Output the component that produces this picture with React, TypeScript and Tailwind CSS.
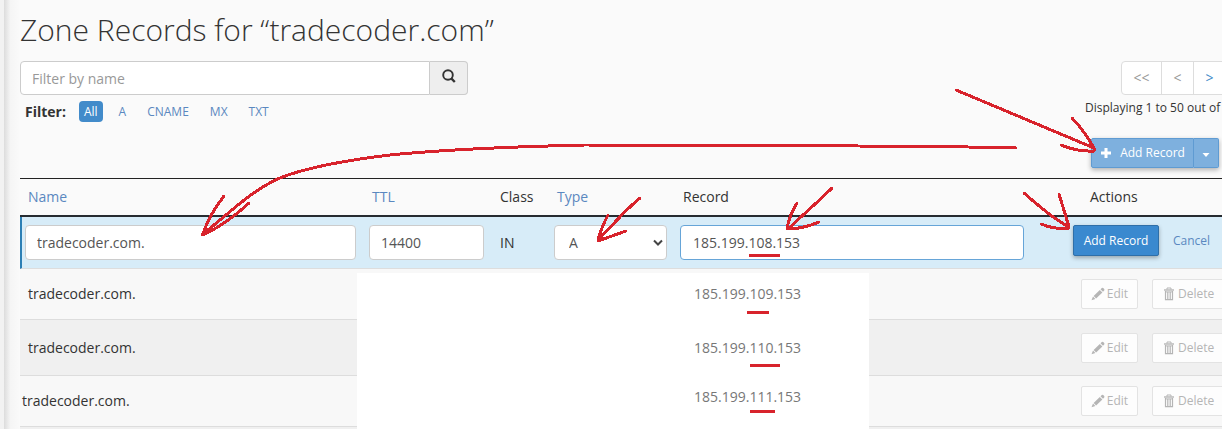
import React from 'react';

const types = ['A', 'CNAME', 'MX', 'TXT'];

const rows = [
  { record: '185.199.109.153', row: 'h-[51px] bg-[#f8f8f8]', name: 'pl-2', value: 'pb-0' },
  { record: '185.199.110.153', row: 'h-[56px] bg-[#f0f0f0]', name: 'pl-2', value: 'pb-0' },
  { record: '185.199.111.153', row: 'h-[51px] bg-[#f8f8f8]', name: 'pl-0.5', value: 'pb-2' },
];

const arrows = [
  'M956 90 L1094 148',
  'M1072 118 Q1084 130 1095 150',
  'M1061 145 Q1078 152 1094 151',
  'M1016 148 L968 147 L858 146 L585 145 C500 147 440 150 390 155 C340 161 305 168 280 178 C252 190 228 214 202 235',
  'M224 196 Q209 215 203 234',
  'M249 203 Q228 223 203 235',
  'M640 198 C625 210 612 226 598 240',
  'M608 215 Q602 226 598 240',
  'M626 231 L598 241',
  'M832 188 C820 200 806 212 788 229',
  'M797 203 Q789 216 787 229',
  'M819 222 Q802 229 788 229',
  'M1024 193 C1038 205 1050 217 1069 227',
  'M1059 194 Q1064 210 1069 227',
  'M1041 224 Q1056 230 1069 228',
];

const underlines = [
  'M749 255.5 H780',
  'M747 312.5 H769',
  'M750 365.5 H780',
  'M750 411.5 H775',
];

const field = 'h-[35px] w-full rounded border bg-white text-sm text-[#555] outline-none';

function SearchIcon() {
  return (
    <svg width="14" height="14" viewBox="0 0 14 14" fill="none" stroke="#333" aria-hidden="true">
      <circle cx="6" cy="6" r="4.8" strokeWidth="1.9" />
      <path d="M9 9.2 L12.8 13" strokeWidth="2.4" />
    </svg>
  );
}

function PencilIcon() {
  return (
    <svg width="14" height="14" viewBox="0 0 14 14" fill="currentColor" aria-hidden="true">
      <path d="M0.5 13.2 L2 9.6 L4.4 11.9 Z" />
      <path d="M2.6 8.9 L8.8 3 L11.4 5.4 L5.1 11.5 Z" />
      <path d="M9.5 2.3 L10.9 1 Q11.6 0.5 12.2 1.1 L13.2 2.1 Q13.7 2.7 13.2 3.4 L12 4.7 Z" />
    </svg>
  );
}

function TrashIcon() {
  return (
    <svg width="10" height="14" viewBox="0 0 10 14" fill="none" stroke="currentColor" aria-hidden="true">
      <path d="M3 2.5 V1 H7 V2.5" />
      <path d="M0 3 H10" strokeWidth="1.4" />
      <path d="M1.5 4 V12.7 H8.5 V4 M3.8 5 V12.5 M6.2 5 V12.5" strokeWidth="1.2" />
      <path d="M1 4.9 H9" strokeWidth="1" />
    </svg>
  );
}

function PlusIcon() {
  return (
    <svg width="12" height="12" viewBox="0 0 12 12" fill="none" stroke="white" aria-hidden="true">
      <path d="M6 1 V11 M1 6 H11" strokeWidth="3" />
    </svg>
  );
}

function Toolbar() {
  return (
    <div className="flex items-start justify-between">
      <div>
        <form className="flex">
          <input
            aria-label="Filter by name"
            placeholder="Filter by name"
            className="h-[34px] w-[410px] rounded-l border border-[#ccc] bg-white px-[11px] text-sm outline-none placeholder:text-[#999]"
          />
          <button
            type="button"
            aria-label="Search"
            className="flex h-[34px] w-[38px] items-center justify-center rounded-r border border-l-0 border-[#ccc] bg-[#eee] pb-1"
          >
            <SearchIcon />
          </button>
        </form>
        <div className="mt-1.5 flex items-center pl-[5px]">
          <span className="text-sm font-bold">Filter:</span>
          <div className="ml-[13px] flex gap-[11px] text-xs">
            <button type="button" className="h-[21px] rounded bg-[#428bca] px-[5px] text-white">
              All
            </button>
            {types.map((t) => (
              <button type="button" key={t} className="h-[21px] px-[5px] text-[#5a88c0]">
                {t}
              </button>
            ))}
          </div>
        </div>
      </div>
      <div className="w-[157px] shrink-0">
        <nav className="ml-9 flex text-sm text-[#999]">
          <button type="button" className="h-[34px] w-[41px] shrink-0 rounded-l border border-[#ddd] bg-white">
            &lt;&lt;
          </button>
          <button type="button" className="-ml-px h-[34px] w-[33px] shrink-0 border border-[#ddd] bg-white">
            &lt;
          </button>
          <button type="button" className="-ml-px h-[34px] w-[33px] shrink-0 border border-[#ddd] bg-white text-[#428bca]">
            &gt;
          </button>
        </nav>
        <p className="mt-[3px] text-xs leading-5 whitespace-nowrap">Displaying 1 to 50 out of 6</p>
        <div className="mt-5 ml-1.5 flex w-[128px] rounded-xs text-white shadow-[0_2px_5px_rgba(0,0,0,0.3)]">
          <button
            type="button"
            className="flex h-[30px] w-[103px] items-center justify-center gap-2 rounded-l-xs border border-[#5f9bd2] bg-[#7eb0de] text-xs whitespace-nowrap"
          >
            <PlusIcon />
            Add Record
          </button>
          <button
            type="button"
            aria-label="More add options"
            className="flex h-[30px] w-[25px] items-center justify-center rounded-r-xs border border-l-0 border-[#5f9bd2] bg-[#7eb0de] pt-1"
          >
            <svg width="8" height="4" viewBox="0 0 8 4" fill="white" aria-hidden="true">
              <path d="M0.5 0 H7.5 L4 4 Z" />
            </svg>
          </button>
        </div>
      </div>
    </div>
  );
}

function RecordsTable() {
  return (
    <div className="relative mt-2.5">
      <div className="absolute top-[95px] left-[337px] h-[170px] w-[512px] bg-white" />
      <table className="w-full table-fixed border-separate border-spacing-0 text-left text-sm">
        <colgroup>
          <col className="w-[344px]" />
          <col className="w-[128px]" />
          <col className="w-[57px]" />
          <col className="w-[126px]" />
          <col />
          <col className="w-[210px]" />
        </colgroup>
        <thead>
          <tr className="h-[39px] *:border-t *:border-b-2 *:border-t-[#222] *:border-b-[#262b30]">
            <th className="px-2 font-normal text-[#5a88c0]">Name</th>
            <th className="px-2 font-normal text-[#5a88c0]">TTL</th>
            <th className="px-2 font-normal">Class</th>
            <th className="px-2 font-normal text-[#5a88c0]">Type</th>
            <th className="px-2 font-normal">Record</th>
            <th className="pl-[58px] font-normal">Actions</th>
          </tr>
        </thead>
        <tbody>
          <tr className="h-[52px] bg-[#d7ecf8] *:border-b *:border-b-[#ddd]">
            <td className="border-l-2 border-l-[#2c7fb5] pr-2 pl-[3px]">
              <input aria-label="Name" defaultValue="tradecoder.com." className={`${field} border-[#ccc] px-[11px]`} />
            </td>
            <td className="pr-2 pl-[5px]">
              <input aria-label="TTL" defaultValue="14400" className={`${field} border-[#ccc] px-[11px]`} />
            </td>
            <td className="px-2 text-[#333]">IN</td>
            <td className="pr-2 pl-[5px]">
              <div className="relative">
                <select aria-label="Type" className={`${field} appearance-none border-[#ccc] px-3.5`}>
                  {types.map((t) => (
                    <option key={t}>{t}</option>
                  ))}
                </select>
                <svg
                  className="pointer-events-none absolute top-3.5 right-1"
                  width="10"
                  height="8"
                  viewBox="0 0 10 8"
                  fill="none"
                  stroke="#444"
                  strokeWidth="2"
                  aria-hidden="true"
                >
                  <path d="M1 1.5 L5 5.5 L9 1.5" />
                </svg>
              </div>
            </td>
            <td className="pr-2 pl-[5px]">
              <input aria-label="Record" defaultValue="185.199.108.153" className={`${field} border-[#66a5d8] px-3`} />
            </td>
            <td className="pt-2 pl-[41px] align-top">
              <div className="flex items-center gap-3.5 text-xs">
                <button
                  type="button"
                  className="h-[31px] w-[86px] rounded-xs border border-[#2f6fa8] bg-[#3a89cf] text-white shadow-[0_2px_4px_rgba(0,0,0,0.3)]"
                >
                  Add Record
                </button>
                <button type="button" className="text-[#5a88c0]">
                  Cancel
                </button>
              </div>
            </td>
          </tr>
          {rows.map((r) => (
            <tr key={r.record} className={`${r.row} *:border-b *:border-b-[#ddd]`}>
              <td className={r.name}>tradecoder.com.</td>
              <td />
              <td />
              <td />
              <td className={`${r.value} pl-[19px] text-[#777]`}>
                <span className="relative">{r.record}</span>
              </td>
              <td className="pl-[49px]">
                <div className="flex gap-3.5 text-xs text-[#b5b5b5]">
                  <button
                    type="button"
                    className="flex h-[30px] w-[57px] shrink-0 items-center justify-center gap-0.5 rounded-xs border border-[#e3e3e3] bg-[#fdfdfd]"
                  >
                    <PencilIcon />
                    Edit
                  </button>
                  <button
                    type="button"
                    className="flex h-[30px] w-[76px] shrink-0 items-center gap-1 rounded-xs border border-[#e3e3e3] bg-[#fdfdfd] pl-[11px]"
                  >
                    <TrashIcon />
                    Delete
                  </button>
                </div>
              </td>
            </tr>
          ))}
          <tr className="h-3 bg-[#f0f0f0]">
            <td colSpan={6} />
          </tr>
        </tbody>
      </table>
    </div>
  );
}

export default function App() {
  return (
    <div className="relative flex h-screen overflow-hidden bg-[#fafafa] font-['Open_Sans',sans-serif] text-[#333]">
      <div className="w-1 shrink-0 bg-[#f2f2f2]" />
      <div className="w-4 shrink-0 bg-linear-to-r from-[#dcdcdc] via-[#f5f5f5] via-40% to-[#fafafa]" />
      <main className="w-full shrink-0 pt-2.5">
        <h1 className="mb-[11px] text-[30px] leading-10 font-[350]">Zone Records for “tradecoder.com”</h1>
        <Toolbar />
        <RecordsTable />
      </main>
      <svg
        className="pointer-events-none absolute top-0 left-0"
        width="1222"
        height="429"
        viewBox="0 0 1222 429"
        fill="none"
        stroke="#d8232c"
        strokeWidth="3"
        strokeLinejoin="round"
        aria-hidden="true"
      >
        <g strokeLinecap="round" shapeRendering="crispEdges">
          {arrows.map((d) => (
            <path key={d} d={d} />
          ))}
        </g>
        {underlines.map((d) => (
          <path key={d} d={d} />
        ))}
      </svg>
    </div>
  );
}
